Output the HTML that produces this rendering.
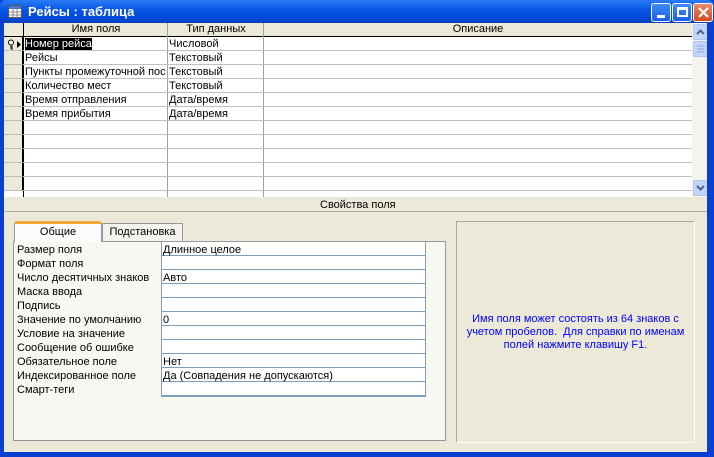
<!DOCTYPE html>
<html><head><meta charset="utf-8">
<style>
*{margin:0;padding:0;box-sizing:border-box}
body{width:714px;height:457px;overflow:hidden;background:#0a3fd8;font-family:"Liberation Sans",sans-serif;font-size:11px;color:#000;position:relative}
.abs{position:absolute}
#title{left:0;top:0;width:714px;height:23px;background:linear-gradient(#2a7cf6,#0757e6 40%,#0348d8 80%,#0b3fbd);border-radius:6px 6px 0 0}
#title .t{left:28px;top:4px;color:#fff;font-weight:bold;font-size:13px}
#client{left:4px;top:23px;width:704px;height:430px;background:#ece9d8}
.grid{left:4px;top:23px;width:688px;height:174px;background:#fff;overflow:hidden}
.hdr{top:0;height:14px;background:#ece9d8;border-bottom:1px solid #000;text-align:center;line-height:13px}
.vl{top:0;width:1px;background:#a0a0a0;height:174px}
.row{left:0;width:688px;height:14px;border-bottom:1px solid #c0c0c0}
.cell{line-height:13px;white-space:nowrap;overflow:hidden}
.sel{left:0;width:19px;background:#ece9d8;border-right:1px solid #000}
.btn{top:3px;width:20px;height:19px;border:1px solid #fff;border-radius:3px;background:linear-gradient(#3d8cf9,#1a5fe8)}
</style></head><body>
<div id="title" class="abs">
 <svg class="abs" style="left:8px;top:5px" width="14" height="13"><rect x="0.5" y="0.5" width="13" height="12" fill="#fff" stroke="#555"/><rect x="1" y="1" width="12" height="3" fill="#4a7ad0"/><path d="M1 7h12M1 10h12M5 4v9M9 4v9" stroke="#888"/></svg>
 <div class="abs t">Рейсы : таблица</div>
 <div class="abs btn" style="left:651px"><div class="abs" style="left:5px;top:11px;width:8px;height:3px;background:#fff"></div></div>
 <div class="abs btn" style="left:672px"><div class="abs" style="left:4px;top:3px;width:11px;height:10px;border:2px solid #fff;border-top-width:3px"></div></div>
 <div class="abs btn" style="left:693px;background:linear-gradient(#e98a6a,#d6481c)"><svg class="abs" style="left:4px;top:3px" width="11" height="11"><path d="M1 1L10 10M10 1L1 10" stroke="#fff" stroke-width="2.2"/></svg></div>
</div>
<div id="client" class="abs"></div>
<div class="abs" style="left:0;top:23px;width:4px;height:434px;background:#0b3fd0"></div>
<div class="abs grid">
 <div class="abs hdr" style="left:0;width:688px"></div>
 <div class="abs hdr" style="left:20px;width:144px">Имя поля</div>
 <div class="abs hdr" style="left:164px;width:96px">Тип данных</div>
 <div class="abs hdr" style="left:260px;width:428px">Описание</div>
 <div class="abs vl" style="left:19px;background:#000"></div>
 <div class="abs vl" style="left:163px"></div>
 <div class="abs vl" style="left:259px"></div>
 <div id="rows"></div>
</div>
<div class="abs" style="left:692px;top:23px;width:16px;height:174px;background:#f4f3ee"></div>
<div class="abs" style="left:693px;top:24px;width:15px;height:16px;background:#c4d5fb;border:1px solid #b3c6f0;border-radius:2px"><svg width="13" height="14"><path d="M3 9l3.5-3.5L10 9" stroke="#4d6185" stroke-width="2" fill="none"/></svg></div>
<div class="abs" style="left:693px;top:41px;width:15px;height:16px;background:#c4d5fb;border:1px solid #b3c6f0;border-radius:2px"><svg width="13" height="14"><path d="M3 4h7M3 7h7M3 10h7" stroke="#8aa4d8"/></svg></div>
<div class="abs" style="left:693px;top:180px;width:15px;height:16px;background:#c4d5fb;border:1px solid #b3c6f0;border-radius:2px"><svg width="13" height="14"><path d="M3 5l3.5 3.5L10 5" stroke="#4d6185" stroke-width="2" fill="none"/></svg></div>
<div class="abs" style="left:320px;top:199px">Свойства поля</div>
<div class="abs" style="left:4px;top:211px;width:703px;height:1px;background:#aca899"></div>
<div class="abs" style="left:102px;top:223px;width:81px;height:19px;background:#f4f3ee;border:1px solid #919b9c;text-align:center;line-height:17px">Подстановка</div>
<div class="abs" style="left:13px;top:241px;width:433px;height:200px;background:#f8f7f2;border:1px solid #919b9c"></div>
<div class="abs" style="left:14px;top:221px;width:88px;height:21px;background:#fcfcfe;border:1px solid #919b9c;border-bottom:none;border-top:3px solid #f0a838;border-radius:3px 3px 0 0;text-align:center;line-height:16px">Общие</div>
<div class="abs" style="left:15px;top:244px;width:411px;height:155px" id="props"></div>
<div class="abs" style="left:456px;top:221px;width:239px;height:222px;border:1px solid #aca899;border-right-color:#fff;border-bottom-color:#fff"></div>
<div class="abs" style="left:456px;top:313px;width:239px;text-align:center;color:#0000ff;line-height:13px">Имя поля может состоять из 64 знаков с<br>учетом пробелов.&nbsp; Для справки по именам<br>полей нажмите клавишу F1.</div>
<div class="abs" style="left:0;top:452px;width:714px;height:5px;background:#0b3fd0"></div>
<div class="abs" style="left:707px;top:23px;width:7px;height:434px;background:#0b3fd0"></div>
<script>
var r=[["Номер рейса","Числовой"],["Рейсы","Текстовый"],["Пункты промежуточной посадки","Текстовый"],["Количество мест","Текстовый"],["Время отправления","Дата/время"],["Время прибытия","Дата/время"]];
var h='';
for(var i=0;i<11;i++){var y=14+i*14;var a=r[i]||["",""];
h+='<div class="abs row" style="top:'+y+'px"></div><div class="abs sel" style="top:'+y+'px;height:14px;border-bottom:1px solid #c0c0c0"></div>';
h+='<div class="abs cell" style="left:21px;top:'+(y+1)+'px;width:141px">'+(i==0?'<span style="background:#000;color:#fff">'+a[0]+'</span>':a[0])+'</div>';
h+='<div class="abs cell" style="left:165px;top:'+(y+1)+'px;width:94px">'+a[1]+'</div>';}
h+='<svg class="abs" style="left:3px;top:16px" width="16" height="11"><circle cx="4" cy="3.5" r="2.5" fill="#fff" stroke="#000"/><path d="M4 6v4M4 8h2M4 10h2" stroke="#000"/><path d="M10 2v7l4-3.5z" fill="#000"/></svg>';
document.getElementById('rows').innerHTML=h;
var p=[["Размер поля","Длинное целое"],["Формат поля",""],["Число десятичных знаков","Авто"],["Маска ввода",""],["Подпись",""],["Значение по умолчанию","0"],["Условие на значение",""],["Сообщение об ошибке",""],["Обязательное поле","Нет"],["Индексированное поле","Да (Совпадения не допускаются)"],["Смарт-теги",""]];
h='<div class="abs" style="left:146px;top:-2px;width:265px;height:155px;background:#fff;border:1px solid #7f9db9;border-top:none"></div>';
for(i=0;i<11;i++){var y=i*14;
h+='<div class="abs" style="left:146px;top:'+(y+11)+'px;width:265px;height:1px;background:#7f9db9"></div>';
h+='<div class="abs cell" style="left:2px;top:'+(y)+'px">'+p[i][0]+'</div><div class="abs cell" style="left:148px;top:'+(y)+'px">'+p[i][1]+'</div>';}
document.getElementById('props').innerHTML=h;
</script>
</body></html>
